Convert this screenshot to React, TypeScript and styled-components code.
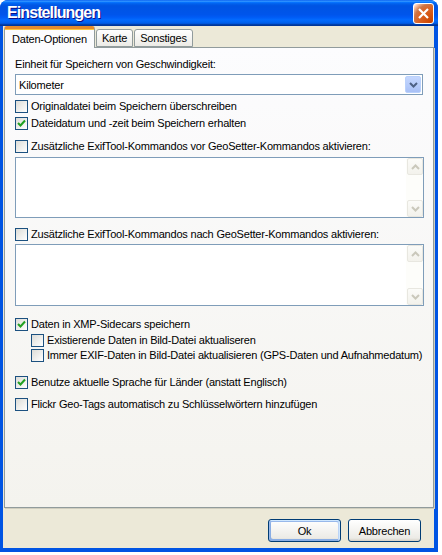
import React from "react";
import styled, { createGlobalStyle } from "styled-components";

const GlobalStyle = createGlobalStyle`
  html, body {
    margin: 0;
    padding: 0;
    background: #ffffff;
  }
  body {
    font-family: "Liberation Sans", Arial, sans-serif;
    font-size: 11px;
    letter-spacing: -0.2px;
  }
`;

const Window = styled.div`
  width: 438px;
  height: 552px;
  display: flex;
  flex-direction: column;
  border-radius: 8px 8px 0 0;
  overflow: hidden;
  background: #0054e3;
`;

const TitleBar = styled.div`
  height: 26px;
  flex: none;
  display: flex;
  align-items: center;
  justify-content: space-between;
  padding: 0 4px 0 7px;
  background: linear-gradient(
    180deg,
    #0058ee 0%,
    #3593ff 4%,
    #288eff 6%,
    #127dff 8%,
    #036ffc 10%,
    #0262ee 14%,
    #0057e5 20%,
    #0054e3 24%,
    #0055eb 56%,
    #005bf5 66%,
    #026afe 76%,
    #0062ef 86%,
    #0052d6 92%,
    #0040ab 94%,
    #003092 100%
  );
`;

const Title = styled.span`
  color: #ffffff;
  font-family: "Liberation Sans", Arial, sans-serif;
  font-weight: bold;
  font-size: 16px;
  letter-spacing: -0.9px;
  text-shadow: 1px 1px #0f1089;
`;

const CloseButton = styled.div`
  width: 19px;
  height: 19px;
  border: 1px solid #ffffff;
  border-radius: 3px;
  display: flex;
  align-items: center;
  justify-content: center;
  background: radial-gradient(circle at 90% 90%, #cc4600 0%, #dc6527 55%, #cd7546 70%, #ffccb2 90%, #ffffff 100%);
`;

const Body = styled.div`
  flex: 1;
  display: flex;
  flex-direction: column;
  background: #ece9d8;
  margin: 0 4px 4px 3px;
  padding-left: 1px;
`;

const TabRow = styled.div`
  display: flex;
  align-items: flex-end;
  height: 21px;
  gap: 1px;
  position: relative;
  z-index: 1;
`;

const Tab = styled.div<{ $active?: boolean }>`
  box-sizing: border-box;
  height: ${(p) => (p.$active ? "22px" : "18px")};
  margin-bottom: ${(p) => (p.$active ? "-1px" : "0")};
  padding: 0 ${(p) => (p.$active ? "7px" : "5px")};
  display: flex;
  align-items: center;
  justify-content: center;
  color: #000000;
  border: 1px solid #919b9c;
  border-bottom: ${(p) => (p.$active ? "none" : "1px solid #919b9c")};
  border-radius: 3px 3px 0 0;
  background: ${(p) =>
    p.$active ? "#fcfcfe" : "linear-gradient(180deg, #ffffff 0%, #ecebe6 100%)"};
  border-top: ${(p) => (p.$active ? "3px solid #ffc83c" : "1px solid #919b9c")};
  ${(p) => (p.$active ? "border-top-color: #e68b2c; box-shadow: inset 0 1px #ffc83c;" : "")}
`;

const Panel = styled.div`
  box-sizing: border-box;
  width: 430px;
  height: 461px;
  border: 1px solid #919b9c;
  box-shadow: 1px 1px #d0cebf;
  background: linear-gradient(180deg, #fcfcfe 0%, #f4f3ee 100%);
  padding: 10px 9px 0 10px;
  display: flex;
  flex-direction: column;
`;

const FieldLabel = styled.div`
  line-height: 13px;
  color: #000000;
`;

const Combo = styled.div`
  box-sizing: border-box;
  height: 21px;
  width: 408px;
  margin-top: 3px;
  border: 1px solid #7f9db9;
  background: #ffffff;
  display: flex;
  align-items: center;
  justify-content: space-between;
  padding: 1px 1px 1px 3px;
`;

const ComboButton = styled.div`
  box-sizing: border-box;
  width: 16px;
  height: 17px;
  border: 1px solid #bad1fc;
  border-radius: 2px;
  background: linear-gradient(180deg, #c5d7fe 0%, #b4cafa 60%, #a8c0f6 100%);
  display: flex;
  align-items: center;
  justify-content: center;
`;

const CheckRow = styled.label<{ $gap: number; $indent?: boolean }>`
  display: flex;
  align-items: center;
  height: 13px;
  margin-top: ${(p) => p.$gap}px;
  margin-left: ${(p) => (p.$indent ? "16px" : "0")};
  gap: 3px;
  line-height: 13px;
  white-space: nowrap;
`;

const Box = styled.span`
  box-sizing: border-box;
  width: 13px;
  height: 13px;
  flex: none;
  border: 1px solid #1c5180;
  background: linear-gradient(135deg, #dcdcd7 0%, #ffffff 100%);
  display: flex;
  align-items: center;
  justify-content: center;
`;

const TextArea = styled.div<{ $gap: number; $height: number }>`
  box-sizing: border-box;
  width: 409px;
  height: ${(p) => p.$height}px;
  margin-top: ${(p) => p.$gap}px;
  border: 1px solid #7f9db9;
  background: #ffffff;
  display: flex;
  justify-content: flex-end;
  padding: 0;
`;

const ScrollBar = styled.div`
  width: 17px;
  display: flex;
  flex-direction: column;
  justify-content: space-between;
  background: #fdfdfa;
`;

const ScrollButton = styled.div`
  box-sizing: border-box;
  width: 16px;
  height: 17px;
  margin-left: 1px;
  border: 1px solid #e8e7e0;
  border-radius: 2px;
  background: linear-gradient(180deg, #fbfbf8 0%, #f3f2ec 100%);
  display: flex;
  align-items: center;
  justify-content: center;
`;

const ButtonRow = styled.div`
  display: flex;
  justify-content: flex-end;
  gap: 7px;
  margin-top: 11px;
  padding-right: 13px;
`;

const Button = styled.button<{ $default?: boolean }>`
  box-sizing: border-box;
  width: 73px;
  height: 23px;
  padding: 0;
  font-family: inherit;
  font-size: 11px;
  letter-spacing: inherit;
  color: #000000;
  border: 1px solid #003c74;
  border-radius: 3px;
  background: linear-gradient(180deg, #ffffff 0%, #ecebe6 86%, #d6d0c5 100%);
  box-shadow: ${(p) =>
    p.$default
      ? "inset -1px 1px #cee7ff, inset 1px 2px #98b8ea, inset -2px 2px #bcd4f6, inset 1px -1px #89ade4, inset 2px -2px #89ade4"
      : "none"};
`;

const Check = () => (
  <svg width="9" height="9" viewBox="0 0 9 9">
    <path d="M1 4 L3.5 6.5 L8 1.5" fill="none" stroke="#21a121" strokeWidth="2" />
  </svg>
);

const Arrow = ({ up, color }: { up?: boolean; color: string }) => (
  <svg width="9" height="6" viewBox="0 0 9 6">
    <path
      d={up ? "M1 5 L4.5 1.5 L8 5" : "M1 1 L4.5 4.5 L8 1"}
      fill="none"
      stroke={color}
      strokeWidth="2"
    />
  </svg>
);

type OptionProps = {
  text: string;
  checked?: boolean;
  gap: number;
  indent?: boolean;
};

const Option = ({ text, checked, gap, indent }: OptionProps) => (
  <CheckRow $gap={gap} $indent={indent}>
    <Box>{checked && <Check />}</Box>
    <span>{text}</span>
  </CheckRow>
);

const CommandBox = ({ gap, height }: { gap: number; height: number }) => (
  <TextArea $gap={gap} $height={height}>
    <ScrollBar>
      <ScrollButton>
        <Arrow up color="#cac8bb" />
      </ScrollButton>
      <ScrollButton>
        <Arrow color="#cac8bb" />
      </ScrollButton>
    </ScrollBar>
  </TextArea>
);

export default function App() {
  return (
    <>
      <GlobalStyle />
      <Window>
        <TitleBar>
          <Title>Einstellungen</Title>
          <CloseButton>
            <svg width="13" height="13" viewBox="0 0 13 13">
              <path d="M2 2 L11 11 M11 2 L2 11" stroke="#ffffff" strokeWidth="2.2" />
            </svg>
          </CloseButton>
        </TitleBar>
        <Body>
          <TabRow>
            <Tab $active>Daten-Optionen</Tab>
            <Tab>Karte</Tab>
            <Tab>Sonstiges</Tab>
          </TabRow>
          <Panel>
            <FieldLabel>Einheit für Speichern von Geschwindigkeit:</FieldLabel>
            <Combo>
              <span>Kilometer</span>
              <ComboButton>
                <Arrow color="#4d6185" />
              </ComboButton>
            </Combo>
            <Option gap={5} text="Originaldatei beim Speichern überschreiben" />
            <Option gap={4} checked text="Dateidatum und -zeit beim Speichern erhalten" />
            <Option gap={10} text="Zusätzliche ExifTool-Kommandos vor GeoSetter-Kommandos aktivieren:" />
            <CommandBox gap={4} height={61} />
            <Option gap={10} text="Zusätzliche ExifTool-Kommandos nach GeoSetter-Kommandos aktivieren:" />
            <CommandBox gap={3} height={62} />
            <Option gap={12} checked text="Daten in XMP-Sidecars speichern" />
            <Option gap={3} indent text="Existierende Daten in Bild-Datei aktualiseren" />
            <Option gap={2} indent text="Immer EXIF-Daten in Bild-Datei aktualisieren (GPS-Daten und Aufnahmedatum)" />
            <Option gap={14} checked text="Benutze aktuelle Sprache für Länder (anstatt Englisch)" />
            <Option gap={9} text="Flickr Geo-Tags automatisch zu Schlüsselwörtern hinzufügen" />
          </Panel>
          <ButtonRow>
            <Button $default>Ok</Button>
            <Button>Abbrechen</Button>
          </ButtonRow>
        </Body>
      </Window>
    </>
  );
}
